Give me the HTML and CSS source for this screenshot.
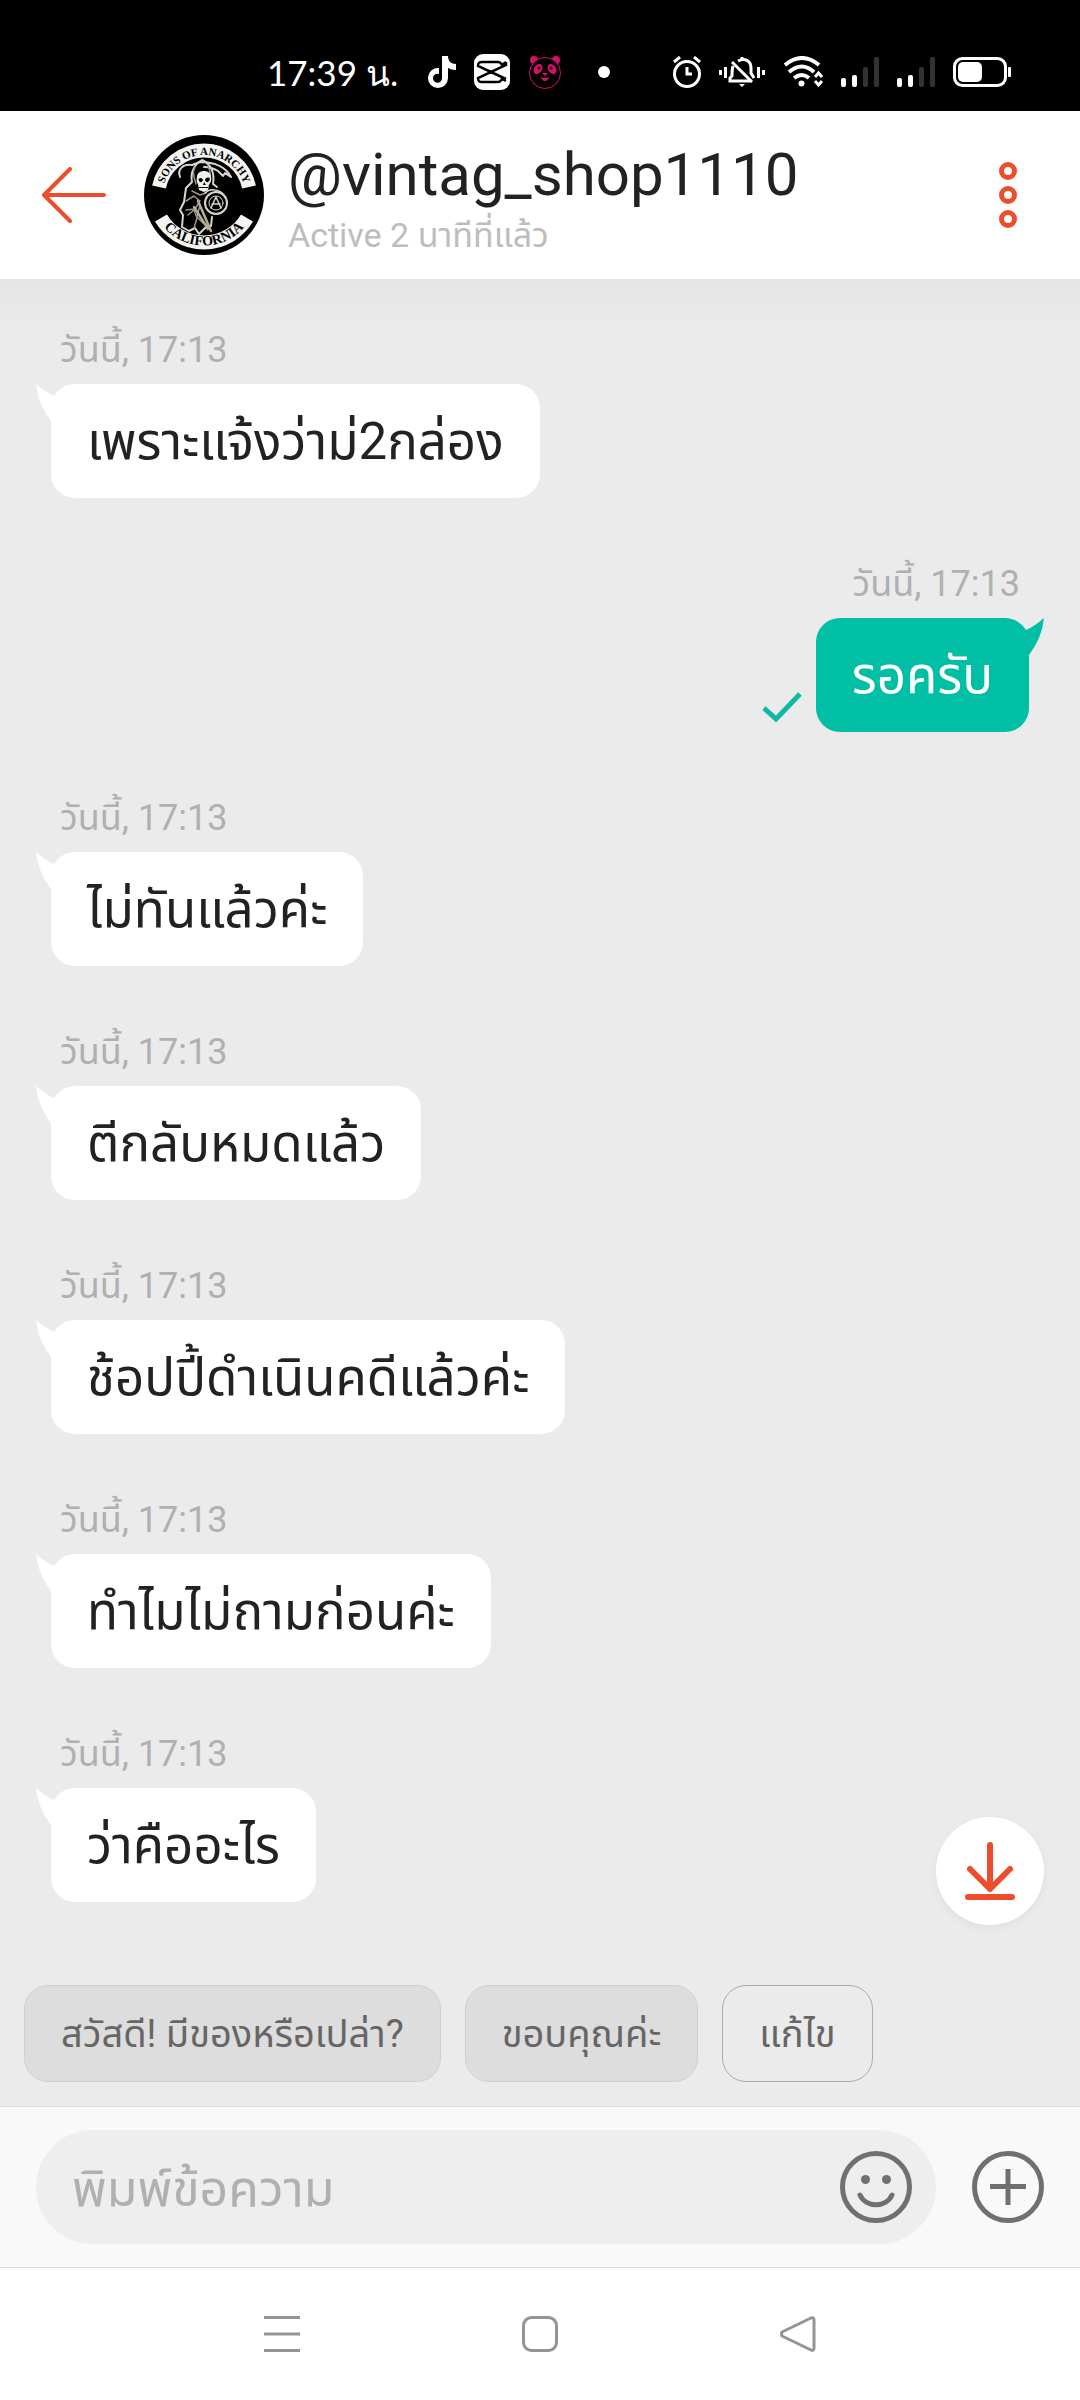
FILE: index.html
```html
<!DOCTYPE html>
<html lang="th">
<head>
    <meta charset="UTF-8">
    <meta name="viewport" content="width=device-width, initial-scale=1.0">
    <title>@vintag_shop1110</title>
    <link rel="stylesheet" href="styles.css">
</head>
<body>

<div class="status-bar">
    <div class="status-left">
        <span class="clock">17:39 น.</span>
        <svg width="28" height="32" viewBox="0 0 28 32"><path d="M14 0h6c0 5 3 8 8 8v6c-3 0-6-1-8-2v10a10 10 0 1 1-9-10v6a4.500 4.500 0 1 0 3 4z" fill="#fff"/></svg>
        <svg width="36" height="36" viewBox="0 0 36 36"><rect width="36" height="36" rx="9" fill="#fff"/><path d="M32 8l-4 3C27 9 26 8 24 8H8C5 8 4 9 4 12l28 13M32 8v3L4 24c0 3 1 4 4 4h16c2 0 3-1 4-3l4 2" fill="none" stroke="#000" stroke-width="2.500"/></svg>
        <svg width="34" height="34" viewBox="0 0 34 34"><g fill="#d70f64"><circle cx="6" cy="5" r="4"/><circle cx="28" cy="5" r="4"/><circle cx="17" cy="18" r="15.500" fill="#000" stroke="#d70f64"/><ellipse cx="10" cy="14" rx="4" ry="5.500" transform="rotate(35 10 14)"/><ellipse cx="24" cy="14" rx="4" ry="5.500" transform="rotate(-35 24 14)"/><path d="M14 18h6l-3 3zM13 22q4 2 8 0q-1 4-4 4t-4-4z"/></g><circle cx="11" cy="13" r="1.500"/><circle cx="23" cy="13" r="1.500"/></svg>
        <span class="more-dot"></span>
    </div>
    <div class="status-right">
        <svg width="28" height="32" viewBox="0 0 28 32" fill="none" stroke="#fff" stroke-width="3"><circle cx="14" cy="18" r="12.500"/><path d="M14 11v7h5M1 6l6-5M27 6l-6-5"/></svg>
        <svg width="46" height="32" viewBox="0 0 46 32" fill="none" stroke="#fff" stroke-width="3"><path d="M1.500 14v5M6.500 11v11M39.500 11v11M44.500 14v5M19 5c8-4 13 1 13 7v5l3 5M14 10c-1 3-1 8-1 10l-2 2v3h22M13 6l20 20M23 4V1"/><path d="M20 28h6l-3 3z" fill="#fff" stroke="none"/></svg>
        <svg width="40" height="32" viewBox="0 0 40 32" fill="none" stroke="#fff" stroke-width="4"><path d="M2 9q17-14 34 0M6 16q13-11 25 0M11 22q8-6 15 0"/><circle cx="18.500" cy="27.500" r="3" fill="#fff" stroke="none"/><path d="M32 21l3.500-4 3.500 4M32 25l3.500 4 3.500-4" stroke-width="3"/></svg>
        <svg width="38" height="30" viewBox="0 0 38 30" fill="#fff"><rect y="21" width="5" height="9" rx="2"/><rect x="11" y="18" width="5" height="12" rx="2"/><rect x="22" y="10" width="5" height="20" rx="2" fill="#333"/><rect x="33" width="5" height="30" rx="2" fill="#333"/></svg>
        <svg width="38" height="30" viewBox="0 0 38 30" fill="#fff"><rect y="21" width="5" height="9" rx="2"/><rect x="11" y="18" width="5" height="12" rx="2"/><rect x="22" y="10" width="5" height="20" rx="2" fill="#333"/><rect x="33" width="5" height="30" rx="2" fill="#333"/></svg>
        <svg width="58" height="30" viewBox="0 0 58 30"><rect x="1.500" y="1.500" width="51" height="27" rx="8" fill="none" stroke="#fff" stroke-width="3"/><rect x="5" y="5" width="24" height="20" rx="5" fill="#fff"/><rect x="55" y="10" width="3" height="10" rx="1" fill="#fff"/></svg>
    </div>
</div>

<header class="chat-header">
    <button class="icon-button" aria-label="กลับ">
        <svg width="64" height="56" viewBox="0 0 64 56" fill="none" stroke="#ee4d2d" stroke-width="4" stroke-linecap="round" stroke-linejoin="round"><path d="M62 28H2M28 2L2 28l26 26"/></svg>
    </button>
    <svg class="avatar" width="120" height="120" viewBox="0 0 120 120">
        <defs>
            <path id="arcTop" d="M18 62A42 42 0 0 1 102 62"/>
            <path id="arcBottom" d="M13 82A53 53 0 0 0 107 82"/>
        </defs>
        <circle cx="60" cy="60" r="60"/>
        <g fill="none" stroke="#f4f4f0" stroke-width="14">
            <path d="M15 52A46 46 0 0 1 105 52"/>
            <path d="M17 83A50 50 0 0 0 103 83"/>
        </g>
        <text class="patch-top"><textPath href="#arcTop" startOffset="50%">SONS OF ANARCHY</textPath></text>
        <text class="patch-bottom"><textPath href="#arcBottom" startOffset="50%">CALIFORNIA</textPath></text>
        <!-- reaper -->
        <g fill="none" stroke="#d8d6cc" stroke-linecap="round" stroke-linejoin="round">
            <path d="M36 42c-3-8 3-13 12-12l8-3c14 0 25 4 31 15l-6-4-2 3-5-5c-5-3-9-4-14-4" stroke-width="2"/>
            <path d="M58 25c-7 4-12 12-10 22l-6 6-2 14-4 8 3 5-1 12 7 4 6-3 4 6 6-6 6-2 1-9M58 25c9 4 13 13 11 24l4 3" stroke-width="2"/>
            <path d="M51 32c-3 5-1 10 1 17M64 31c3 6 3 12 1 18M48 56l8 4 6-2M42 66l8-5 6 5-5 8-9 1M44 80l6-5 3 8-3 10M56 70l-3 12 6 6" stroke-width="1.500" stroke="#99968c"/>
            <path d="M54 66l13 30M50 72l14 22" stroke-width="2.500" stroke="#b5ad98"/>
            <circle cx="72" cy="68" r="11" stroke-width="2"/>
            <circle cx="72" cy="68" r="7" stroke-width="1"/>
            <path d="M67 73l5-11 5 11M68 69h8M61 58c6-6 17-3 20 4" stroke-width="1.500"/>
        </g>
        <path d="M53 42c0-8 14-8 14 0 1 4-1 6-2 7l-1 6-4 2-5-2-1-6c-1-1-2-3-1-7z" fill="#efeee8"/>
        <path d="M54.500 44c2-2 4-1 4.500 1-1 3-4 3-4.500-1zM61 45c1-3 4-3 5-1-1 4-4 4-5 1zM60 47l2 3h-3zM55 52h9v1h-9z"/>
    </svg>
    <div class="shop-info">
        <h1>@vintag_shop1110</h1>
        <p>Active 2 นาทีที่แล้ว</p>
    </div>
    <button class="icon-button" aria-label="เมนู">
        <svg width="18" height="66" viewBox="0 0 18 66" fill="none" stroke="#ee4d2d" stroke-width="5"><circle cx="9" cy="9" r="6.500"/><circle cx="9" cy="33" r="6.500"/><circle cx="9" cy="57" r="6.500"/></svg>
    </button>
</header>

<main class="chat">
    <div class="message">
        <time>วันนี้, 17:13</time>
        <div class="bubble">
            <svg class="tail" width="24" height="40" viewBox="0 0 24 40"><path d="M0 0q9 8 18 12l6 8-9 17Q2 20 0 0z"/></svg>
            เพราะแจ้งว่าม่2กล่อง
        </div>
    </div>
    <div class="message mine">
        <time>วันนี้, 17:13</time>
        <div class="row">
            <svg class="check" width="39" height="30" viewBox="0 0 39 30"><path d="M1 16l12 11L37 2" fill="none" stroke="#0fbaa2" stroke-width="5"/></svg>
            <div class="bubble">
                <svg class="tail" width="24" height="40" viewBox="0 0 24 40"><path d="M0 0q9 8 18 12l6 8-9 17Q2 20 0 0z"/></svg>
                รอครับ
            </div>
        </div>
    </div>
    <div class="message">
        <time>วันนี้, 17:13</time>
        <div class="bubble">
            <svg class="tail" width="24" height="40" viewBox="0 0 24 40"><path d="M0 0q9 8 18 12l6 8-9 17Q2 20 0 0z"/></svg>
            ไม่ทันแล้วค่ะ
        </div>
    </div>
    <div class="message">
        <time>วันนี้, 17:13</time>
        <div class="bubble">
            <svg class="tail" width="24" height="40" viewBox="0 0 24 40"><path d="M0 0q9 8 18 12l6 8-9 17Q2 20 0 0z"/></svg>
            ตีกลับหมดแล้ว
        </div>
    </div>
    <div class="message">
        <time>วันนี้, 17:13</time>
        <div class="bubble">
            <svg class="tail" width="24" height="40" viewBox="0 0 24 40"><path d="M0 0q9 8 18 12l6 8-9 17Q2 20 0 0z"/></svg>
            ช้อปปี้ดำเนินคดีแล้วค่ะ
        </div>
    </div>
    <div class="message">
        <time>วันนี้, 17:13</time>
        <div class="bubble">
            <svg class="tail" width="24" height="40" viewBox="0 0 24 40"><path d="M0 0q9 8 18 12l6 8-9 17Q2 20 0 0z"/></svg>
            ทำไมไม่ถามก่อนค่ะ
        </div>
    </div>
    <div class="message">
        <time>วันนี้, 17:13</time>
        <div class="bubble">
            <svg class="tail" width="24" height="40" viewBox="0 0 24 40"><path d="M0 0q9 8 18 12l6 8-9 17Q2 20 0 0z"/></svg>
            ว่าคืออะไร
        </div>
    </div>
    <button class="scroll-down" aria-label="เลื่อนลง">
        <svg width="50" height="60" viewBox="0 0 50 60" fill="none" stroke="#ee4d2d" stroke-width="6" stroke-linecap="round" stroke-linejoin="round"><path d="M25 4v44M5 28l20 20 20-20M3 56h44"/></svg>
    </button>
</main>

<div class="quick-replies">
    <button>สวัสดี! มีของหรือเปล่า?</button>
    <button>ขอบคุณค่ะ</button>
    <button class="edit">แก้ไข</button>
</div>

<form class="composer">
    <div class="field">
        <input type="text" placeholder="พิมพ์ข้อความ" aria-label="พิมพ์ข้อความ">
        <button type="button" class="icon-button" aria-label="อีโมจิ">
            <svg width="72" height="72" viewBox="0 0 72 72" fill="none" stroke="#707070" stroke-width="5" stroke-linecap="round"><circle cx="36" cy="36" r="33.500"/><path d="M20 44c6 13 26 13 32 0"/><g fill="#707070" stroke="none"><circle cx="25.500" cy="28.500" r="4.500"/><circle cx="46.500" cy="28.500" r="4.500"/></g></svg>
        </button>
    </div>
    <button type="button" class="icon-button" aria-label="เพิ่ม">
        <svg width="72" height="72" viewBox="0 0 72 72" fill="none" stroke="#707070" stroke-width="5"><circle cx="36" cy="36" r="33.500"/><path d="M36 18v36M18 35.500h36"/></svg>
    </button>
</form>

<nav class="nav-bar">
    <button class="icon-button" aria-label="แอปล่าสุด">
        <svg width="36" height="36" viewBox="0 0 36 36" stroke="#949494" stroke-width="3"><path d="M0 1.500h36M0 18h36M0 34.500h36"/></svg>
    </button>
    <button class="icon-button" aria-label="หน้าหลัก">
        <svg width="36" height="36" viewBox="0 0 36 36" fill="none" stroke="#949494" stroke-width="3"><rect x="1.500" y="1.500" width="33" height="33" rx="8"/></svg>
    </button>
    <button class="icon-button" aria-label="ย้อนกลับ">
        <svg width="36" height="36" viewBox="0 0 36 36" fill="none" stroke="#949494" stroke-width="3" stroke-linejoin="round"><path d="M2 16q-1 2 0 4l29 14q3 1 3-2V4q0-3-3-2z"/></svg>
    </button>
</nav>

</body>
</html>
```
FILE: styles.css
```css
* {
    box-sizing: border-box;
}
body {
    font-family: Roboto, "Noto Sans Thai", "Noto Sans", sans-serif;
    background-color: #ebebeb;
    color: #222;
    display: flex;
    flex-direction: column;
    min-height: 100vh;
    margin: 0;
}
svg {
    display: block;
    flex-shrink: 0;
}
button {
    font-family: inherit;
    cursor: pointer;
}
.icon-button {
    padding: 0;
    border: none;
    background: none;
}

/* phone status bar */
.status-bar {
    display: flex;
    justify-content: space-between;
    align-items: center;
    height: 111px;
    padding: 33px 69px 0 267px;
    background-color: #000;
    color: #fff;
}
.status-left,
.status-right {
    display: flex;
    align-items: center;
    gap: 18px;
}
.clock {
    font-family: Lato, sans-serif;
    font-size: 35px;
    line-height: 40px;
    margin-right: 12px;
    white-space: nowrap;
}
.more-dot {
    width: 12px;
    height: 12px;
    margin-left: 18px;
    border-radius: 50%;
    background-color: #fff;
}

/* header */
.chat-header {
    display: flex;
    align-items: center;
    height: 168px;
    padding: 0 63px 0 42px;
    background-color: #fff;
}
.avatar {
    margin: 0 24px 0 38px;
}
.patch-top,
.patch-bottom {
    font-family: "Liberation Serif", serif;
    font-weight: bold;
    text-anchor: middle;
}
.patch-top {
    font-size: 11px;
}
.patch-bottom {
    font-size: 14px;
}
.shop-info {
    flex: 1;
    padding-top: 8px;
}
.shop-info h1 {
    margin: 0;
    font-size: 60px;
    font-weight: 400;
    line-height: 72px;
}
.shop-info p {
    margin: 0;
    color: #bdbdbd;
    font-size: 34px;
    line-height: 48px;
}

/* messages */
.chat {
    flex: 1;
    position: relative;
    display: flex;
    flex-direction: column;
    gap: 65px;
    padding: 50px 51px 64px;
    background: linear-gradient(#e5e5e5, #eaeaea 40px, #ebebeb 90px);
}
.message {
    display: flex;
    flex-direction: column;
    align-items: flex-start;
    gap: 13px;
}
.message time {
    padding: 0 9px;
    color: #b0b0b0;
    font-size: 36px;
    line-height: 42px;
}
.bubble {
    position: relative;
    height: 114px;
    padding: 2px 36px 0;
    border-radius: 24px;
    background-color: #fff;
    font-size: 51px;
    line-height: 112px;
    white-space: nowrap;
}
.tail {
    position: absolute;
    top: 0;
    left: -15px;
    fill: #fff;
}
.mine {
    align-items: flex-end;
}
.mine .row {
    display: flex;
    align-items: flex-end;
    gap: 14px;
}
.mine .check {
    margin-bottom: 10px;
}
.mine .bubble {
    background-color: #00bfa5;
    color: #fff;
}
.mine .tail {
    left: auto;
    right: -15px;
    fill: #00bfa5;
    transform: scaleX(-1);
}
.scroll-down {
    position: absolute;
    right: 36px;
    bottom: 60px;
    display: flex;
    justify-content: center;
    align-items: center;
    width: 108px;
    height: 108px;
    border: none;
    border-radius: 50%;
    background-color: #fff;
    box-shadow: 0 3px 8px rgba(0, 0, 0, 0.05);
}

/* quick replies */
.quick-replies {
    display: flex;
    gap: 24px;
    padding: 0 24px 24px;
}
.quick-replies button {
    height: 97px;
    padding: 3px 36px 0;
    border: 1px solid #d0d0d0;
    border-radius: 24px;
    background-color: #ddd;
    color: #666;
    font-size: 38px;
    white-space: nowrap;
}
.quick-replies .edit {
    border-color: #aaa;
    background-color: transparent;
}

/* composer */
.composer {
    display: flex;
    align-items: center;
    gap: 36px;
    height: 162px;
    padding: 0 36px;
    border-top: 1px solid #e0e0e0;
    border-bottom: 1px solid #e0e0e0;
    background-color: #f9f9f9;
}
.field {
    flex: 1;
    display: flex;
    align-items: center;
    height: 114px;
    padding: 0 24px 0 36px;
    border-radius: 57px;
    background-color: #eee;
}
.field input {
    flex: 1;
    min-width: 0;
    padding: 3px 0 0;
    border: none;
    outline: none;
    background: none;
    font-family: inherit;
    font-size: 50px;
    line-height: 72px;
}
.field input::placeholder {
    color: #b0b0b0;
}

/* phone navigation */
.nav-bar {
    display: flex;
    justify-content: center;
    align-items: center;
    gap: 222px;
    height: 132px;
    background-color: #fff;
}
```
